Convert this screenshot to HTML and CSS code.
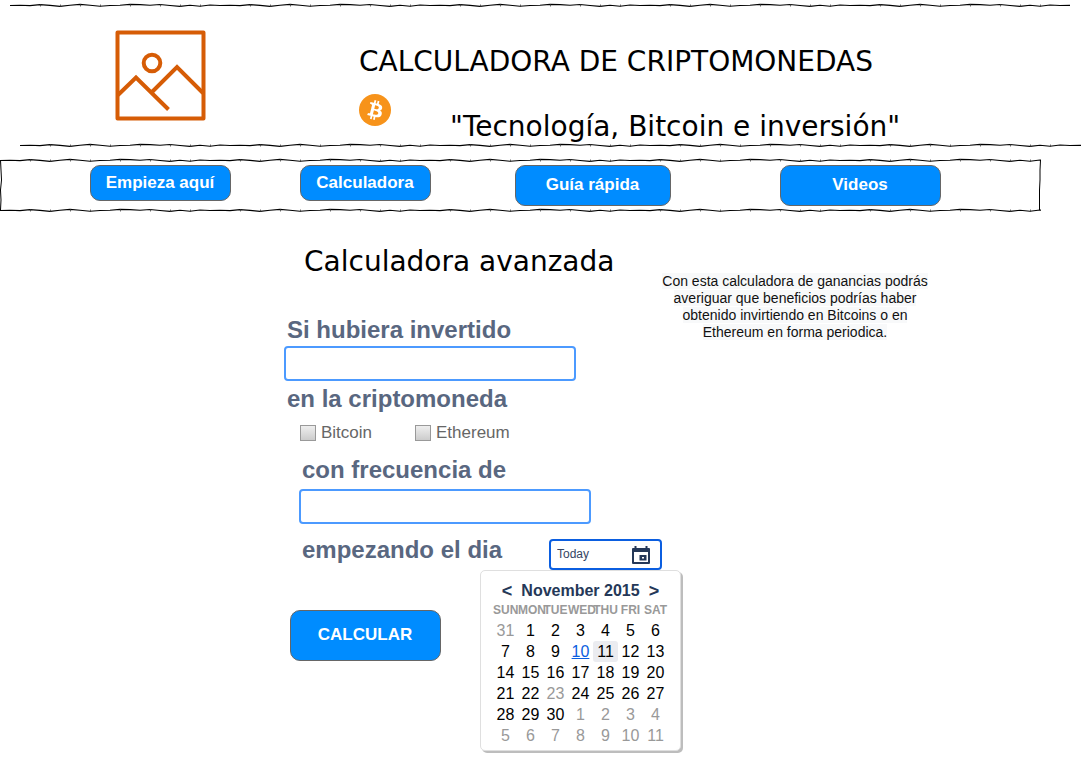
FILE: index.html
```html
<!DOCTYPE html>
<html lang="es">
<head>
<meta charset="utf-8">
<meta name="viewport" content="width=device-width, initial-scale=1">
<title>Calculadora de criptomonedas</title>
<link rel="stylesheet" href="styles.css">
</head>
<body>
<header>
  <svg class="rule rule-top" aria-hidden="true">
    <defs>
      <pattern id="wave" width="210" height="10" patternUnits="userSpaceOnUse">
        <path d="M0 5.5L10 5.2L20 5.6L30 4.6L40 5.4L50 6.4L60 5.2L70 4.4L80 5.2L90 6.300L100 5.5L110 5.2L120 4.4L130 4.6L140 5.2L150 4.5L160 5.5L170 6.4L180 5.2L190 6.300L200 5L210 5.5" fill="none" stroke="#000" stroke-width="1.1"/>
        <path d="M30.500 4V6.500M50.500 4.500V7M70.500 4V6.500M90.500 4.500V7M120.500 4V6.500M150.500 4V6.500M170.500 4.500V7M190.500 4.500V7" stroke="#333" stroke-width=".7"/>
      </pattern>
    </defs>
    <rect width="100%" height="10" fill="url(#wave)"/>
  </svg>
  <div class="masthead">
    <svg class="logo" viewBox="0 0 91 91" role="img" aria-label="Imagen">
      <g fill="none" stroke="#d65c06" stroke-width="4">
        <rect x="2.500" y="2.500" width="86" height="86" stroke-linejoin="round"/>
        <circle cx="37" cy="33" r="8.300"/>
        <path d="M3 65L21 47.500L53.500 79.500M36.500 62.500L62 37L88 63"/>
      </g>
    </svg>
    <div class="brand">
      <h1>CALCULADORA DE CRIPTOMONEDAS</h1>
      <div class="tagline">
        <svg class="coin" viewBox="0 0 32 32" role="img" aria-label="Bitcoin">
          <circle cx="16" cy="16" r="16" fill="#f7931a"/>
          <path fill="#fff" d="M23.189 14.020c.314-2.096-1.283-3.223-3.465-3.975l.708-2.840-1.728-.430-.690 2.765c-.454-.114-.920-.220-1.385-.326l.695-2.783L15.596 6l-.708 2.839c-.376-.086-.746-.170-1.104-.260l.002-.009-2.384-.595-.460 1.846s1.283.294 1.256.312c.700.175.826.638.805 1.006l-.806 3.235c.048.012.110.030.180.057l-.183-.045-1.130 4.532c-.086.212-.303.531-.793.410.018.025-1.256-.313-1.256-.313l-.858 1.978 2.250.561c.418.105.828.215 1.231.318l-.715 2.872 1.727.430.708-2.840c.472.127.930.245 1.378.357l-.706 2.828 1.728.430.715-2.866c2.948.558 5.164.333 6.097-2.333.752-2.146-.037-3.385-1.588-4.192 1.130-.260 1.980-1.003 2.207-2.538zm-3.950 5.538c-.533 2.147-4.148.986-5.320.695l.950-3.805c1.172.293 4.929.872 4.370 3.110zm.535-5.569c-.487 1.953-3.495.960-4.470.717l.860-3.450c.975.243 4.118.696 3.610 2.733z"/>
        </svg>
        <p>"Tecnología, Bitcoin e inversión"</p>
      </div>
    </div>
  </div>
  <svg class="rule rule-bottom" aria-hidden="true"><rect width="100%" height="10" fill="url(#wave)"/></svg>
</header>
<nav class="menu" aria-label="Principal">
  <svg class="rule" aria-hidden="true"><rect width="100%" height="10" fill="url(#wave)"/></svg>
  <div class="menu-items">
    <button class="btn start" type="button">Empieza aquí</button>
    <button class="btn calc" type="button">Calculadora</button>
    <button class="btn tall guide" type="button">Guía rápida</button>
    <button class="btn tall videos" type="button">Videos</button>
  </div>
  <svg class="rule" aria-hidden="true"><rect width="100%" height="10" fill="url(#wave)"/></svg>
  <svg class="side side-left" viewBox="0 0 4 50" preserveAspectRatio="none" aria-hidden="true"><path d="M.5 0L1 10L1.500 20L.5 30L1 40L.5 50"/></svg>
  <svg class="side side-right" viewBox="0 0 4 50" preserveAspectRatio="none" aria-hidden="true"><path d="M3.500 0L3 10L3 20L2.500 30L2.500 40L2.500 50"/></svg>
</nav>
<main>
  <form>
    <h2>Calculadora avanzada</h2>
    <label class="title" for="amount">Si hubiera invertido</label>
    <input class="box" id="amount" type="text">
    <fieldset>
      <legend class="title">en la criptomoneda</legend>
      <div class="checks">
        <label><input type="checkbox">Bitcoin</label>
        <label><input type="checkbox">Ethereum</label>
      </div>
    </fieldset>
    <div class="indent">
      <label class="title" for="frequency">con frecuencia de</label>
      <input class="box" id="frequency" type="text">
      <div class="date-row">
        <label class="title" for="start">empezando el dia</label>
        <div class="date">
          <input id="start" type="text" value="Today">
          <svg class="date-icon" viewBox="0 0 18 18" aria-hidden="true">
            <path fill="#253858" fill-rule="evenodd" d="M2.500 0h2v2h9V0h2v2H17q1 0 1 1v14q0 1-1 1H1q-1 0-1-1V3q0-1 1-1h1.500zM2 6v10h14V6zM7.500 9h7v5.500h-7zM10 11v1.500h2V11z"/>
          </svg>
          <div class="calendar">
            <div class="month">
              <button type="button" aria-label="Mes anterior">&lt;</button>
              <span>November 2015</span>
              <button type="button" aria-label="Mes siguiente">&gt;</button>
            </div>
            <table>
              <thead><tr><th>SUN</th><th>MON</th><th>TUE</th><th>WED</th><th>THU</th><th>FRI</th><th>SAT</th></tr></thead>
              <tbody>
                <tr><td class="dim">31</td><td>1</td><td>2</td><td>3</td><td>4</td><td>5</td><td>6</td></tr>
                <tr><td>7</td><td>8</td><td>9</td><td><a href="#start">10</a></td><td class="hover">11</td><td>12</td><td>13</td></tr>
                <tr><td>14</td><td>15</td><td>16</td><td>17</td><td>18</td><td>19</td><td>20</td></tr>
                <tr><td>21</td><td>22</td><td class="dim">23</td><td>24</td><td>25</td><td>26</td><td>27</td></tr>
                <tr><td>28</td><td>29</td><td>30</td><td class="dim">1</td><td class="dim">2</td><td class="dim">3</td><td class="dim">4</td></tr>
                <tr><td class="dim">5</td><td class="dim">6</td><td class="dim">7</td><td class="dim">8</td><td class="dim">9</td><td class="dim">10</td><td class="dim">11</td></tr>
              </tbody>
            </table>
          </div>
        </div>
      </div>
    </div>
    <button class="btn submit" type="submit">CALCULAR</button>
  </form>
  <p class="intro"><span>Con esta calculadora de ganancias podrás averiguar que beneficios podrías haber obtenido invirtiendo en Bitcoins o en Ethereum en forma periodica.</span></p>
</main>
</body>
</html>
```
FILE: styles.css
```css
* { box-sizing: border-box; }
body { margin: 0; background: #fff; color: #000; font-family: "Liberation Sans", Arial, sans-serif; }
h1, h2, p { margin: 0; }
h1, h2, .tagline p { font: 400 28px/34px Verdana, "DejaVu Sans", sans-serif; white-space: nowrap; }
input, button { font-family: inherit; }

.rule { display: block; width: 100%; height: 10px; }
.rule-top { width: calc(100% - 21px); margin-left: 10px; }
.rule-bottom { width: calc(100% - 20px); margin-left: 20px; }

.masthead { display: flex; align-items: flex-start; gap: 153px; padding: 20px 0 0 115px; height: 130px; }
.logo { flex: none; width: 91px; height: 91px; }
.brand { padding-top: 15px; }
.tagline { display: flex; align-items: flex-start; gap: 59px; padding-top: 15px; }
.tagline p { padding-top: 16px; }
.coin { width: 32px; height: 32px; }

.menu { position: relative; margin: 5px 40px 0 0; }
.menu-items { display: flex; align-items: flex-start; height: 40px; padding-left: 90px; }
.side { position: absolute; top: 5px; width: 4px; height: 50px; fill: none; stroke: #000; }
.side-left { left: 0; }
.side-right { right: 0; }
.btn { height: 36px; padding: 0 8px 1px 7px; border: 1px solid #666; border-radius: 10px; background: #008cff; color: #fff; font-size: 17px; font-weight: bold; }
.tall { height: 41px; padding-bottom: 2px; }
.start { width: 141px; }
.calc { width: 131px; margin-left: 69px; }
.guide { width: 156px; margin-left: 84px; }
.videos { width: 161px; margin-left: 109px; }

main { display: flex; align-items: flex-start; gap: 69px; padding: 30px 20px 110px 284px; }
form { width: 307px; }
h2 { padding-left: 20px; }
.title { display: block; padding: 0 0 0 3px; color: #596780; font-size: 24px; font-weight: bold; line-height: 28px; }
h2 + .title { margin-top: 37px; }
.box { display: block; width: 292px; height: 35px; margin-top: 2px; padding: 0 8px; border: 2px solid #4c9aff; border-radius: 4px; background: #fff; font-size: 16px; }
fieldset { margin: 4px 0 0; padding: 0; border: 0; }
.checks { display: flex; gap: 43px; padding: 10px 0 0 16px; }
.checks label { display: flex; align-items: center; gap: 5px; height: 20px; color: #666; font-size: 17px; line-height: 20px; }
.checks input { appearance: none; width: 16px; height: 16px; margin: 0; border: 1px solid #999; background: linear-gradient(#eee, #ccc); }
.checks input:checked { background: #008cff; }
.indent { padding: 13px 0 0 15px; }
.indent > .box { margin-top: 5px; }
.date-row { display: flex; justify-content: space-between; align-items: flex-start; width: 363px; margin-top: 15px; }
.date-row .title { line-height: 22px; }
.date { position: relative; display: flex; width: 113px; height: 31px; }
.date input { width: 100%; padding: 0 30px 2px 6px; border: 2px solid #0b5ee0; border-radius: 4px; color: #344563; font-size: 12px; }
.date-icon { position: absolute; top: 7px; right: 12px; width: 18px; height: 18px; }
.calendar { position: absolute; top: 31px; right: -19px; width: 201px; padding: 10px 12px 4px; border: 1px solid #dfdfdf; border-radius: 5px; background: #fff; box-shadow: 2px 2px 0 #bdbdbd; }
.month { display: flex; justify-content: center; align-items: center; gap: 9px; height: 20px; color: #253858; font-size: 16px; font-weight: bold; }
.month button { padding: 0; border: 0; background: none; color: inherit; font-size: 18px; font-weight: bold; line-height: 20px; }
table { width: 175px; border-collapse: collapse; table-layout: fixed; font-size: 16px; }
th, td { padding: 0; text-align: center; white-space: nowrap; }
th { height: 19px; color: #999; font-size: 12px; line-height: 18px; vertical-align: top; }
td { height: 21px; color: #000; line-height: 20px; }
td a { color: #0b5ee0; }
td.dim { color: #999; }
td.hover { border-radius: 3px; background: #ebecf0; }
.submit { display: block; width: 151px; height: 51px; margin: 40px 0 0 6px; }
.intro { width: 270px; padding-top: 28px; color: #111; text-align: center; font-size: 14px; line-height: 17px; }
.intro span { background: #f8f9fa; }
```
